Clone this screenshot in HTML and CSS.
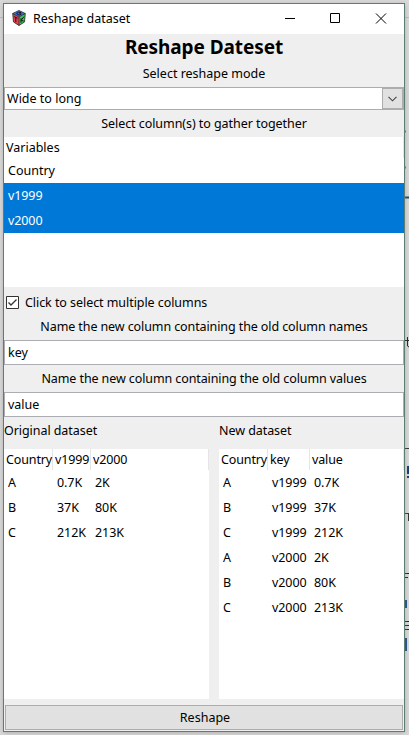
FILE: index.html
```html
<!DOCTYPE html>
<html lang="en">
<head>
<meta charset="utf-8">
<title>Reshape dataset</title>
<link rel="stylesheet" href="styles.css">
</head>
<body>
<svg class="backdrop" width="409" height="735" viewBox="0 0 409 735">
  <path d="M0 17.5H3M405 17.5H409" stroke="#bdbdbd"/>
  <path d="M405 131.5H406M405 167.5H406" stroke="#5677a5" stroke-width="2"/>
  <path d="M405 197.5H409" stroke="#1c4668" stroke-width="2"/>
  <path d="M405 340.5H409M407.5 337V346L409 347" stroke="#222" fill="none"/>
  <path d="M405 448.5H409M405 513.5H409M408.5 513V521" stroke="#333" fill="none"/>
  <path d="M408 466V474M408 476V478" stroke="#153c78" stroke-width="2"/>
  <path d="M405 573.5H409M405 577.5H408M405 621.5H409M405 625.5H409M405 629.5H409" stroke="#222"/>
  <path d="M406 600V608M406 638V651" stroke="#164a88" stroke-width="2"/>
</svg>
<main class="window">
  <header class="titlebar">
    <svg class="logo" width="14" height="16" viewBox="0 0 14 16">
      <path d="M7 .5L13.3 3.5 7 7 .7 3.5Z" fill="#3c6fd6"/>
      <path d="M.7 3.5L7 7V15.5L1.5 12Z" fill="#e8404a"/>
      <path d="M13.3 3.5L7 7V15.5L12.5 12Z" fill="#2fcf48"/>
      <path d="M7 .5L13.3 3.5 12.5 12 7 15.5 1.5 12 .7 3.5ZM.7 3.5L7 7L13.3 3.5M7 7V15.5" fill="none" stroke="#26262e" stroke-width=".8"/>
      <path d="M9 2.6L6.5 2.2 4.6 3.5 7 5.2 9.2 4 7.5 3.5M2.2 6.6L5.5 8.3M3.8 7.5V12M9 8.2V12.8M12 6.6L9.2 10.2L11.8 11.2" fill="none" stroke="#151523"/>
    </svg>
    <span class="caption">Reshape dataset</span>
    <svg class="controls" width="102" height="11" viewBox="0 0 102 11">
      <path d="M0 5.5H10M45.5.5H54.5V9.5H45.5ZM91 .5L101 10.5M101 .5L91 10.5" fill="none" stroke="#000"/>
    </svg>
  </header>
  <h1>Reshape Dateset</h1>
  <p class="label mode">Select reshape mode</p>
  <div class="combo"><span>Wide to long</span><i><svg width="9" height="6" viewBox="0 0 9 6"><path d="M.5 .8L4.5 4.8 8.5 .8" fill="none" stroke="#444" stroke-width="1.1"/></svg></i></div>
  <p class="label gather">Select column(s) to gather together</p>
  <section class="list">
    <div class="list-head">Variables</div>
    <div class="item">Country</div>
    <div class="item selected">v1999</div>
    <div class="item selected">v2000</div>
  </section>
  <div class="check"><svg width="13" height="13" viewBox="0 0 13 13"><path d="M.5.5H12.5V12.5H.5Z" fill="#fff" stroke="#333"/><path d="M2.5 6.5L5 9 10.5 3.5" fill="none" stroke="#333" stroke-width="1.3"/></svg><span>Click to select multiple columns</span></div>
  <p class="label names">Name the new column containing the old column names</p>
  <div class="entry">key</div>
  <p class="label values">Name the new column containing the old column values</p>
  <div class="entry">value</div>
  <div class="tables">
    <section>
      <h2>Original dataset</h2>
      <div class="grid original">
        <b>Country</b><b>v1999</b><b>v2000</b>
        <span>A</span><span>0.7K</span><span>2K</span>
        <span>B</span><span>37K</span><span>80K</span>
        <span>C</span><span>212K</span><span>213K</span>
      </div>
    </section>
    <section>
      <h2>New dataset</h2>
      <div class="grid new">
        <b>Country</b><b>key</b><b>value</b>
        <span>A</span><span>v1999</span><span>0.7K</span>
        <span>B</span><span>v1999</span><span>37K</span>
        <span>C</span><span>v1999</span><span>212K</span>
        <span>A</span><span>v2000</span><span>2K</span>
        <span>B</span><span>v2000</span><span>80K</span>
        <span>C</span><span>v2000</span><span>213K</span>
      </div>
    </section>
  </div>
  <button>Reshape</button>
</main>
</body>
</html>
```
FILE: styles.css
```css
* { box-sizing: border-box; }
body { margin: 0; width: 409px; height: 735px; overflow: hidden; padding: 3px; background: #dadada; color: #000; font: 12.5px/18px "Noto Sans", "Noto Sans CJK SC", sans-serif; }
.backdrop { position: absolute; left: 0; top: 0; }
.window { position: relative; width: 402px; height: 729px; border: 1px solid #5d7d73; background: #efefef; box-shadow: 0 1px 5px #8888; display: flex; flex-direction: column; }
.titlebar { height: 30px; flex: none; display: flex; align-items: center; background: #fff; padding: 0 17px 2px 8px; }
.caption { margin-left: 7px; padding-top: 2px; }
.controls { margin-left: auto; }
h1 { margin: 0; height: 28px; font-size: 19px; line-height: 26px; letter-spacing: -.08px; text-align: center; }
p { margin: 0; text-align: center; white-space: nowrap; }
.mode { height: 25px; line-height: 23px; }
.combo { height: 23px; flex: none; border: 1px solid #adadad; background: #fff; display: flex; justify-content: space-between; align-items: center; padding-left: 2px; }
.combo i { width: 21px; height: 21px; border: 1px solid #adadad; background: #e1e1e1; display: grid; place-items: center; }
.gather { height: 27px; line-height: 27px; letter-spacing: -.06px; }
.list { height: 150px; flex: none; background: #fff; }
.list-head { height: 21px; line-height: 22px; padding-left: 2px; border-right: 1px solid #e5e5e5; }
.item { height: 25px; line-height: 25px; padding-left: 4px; }
.selected { background: #0078d7; color: #fff; letter-spacing: -.1px; }
.check { height: 29px; display: flex; align-items: center; gap: 6px; padding: 2px 2px 0; letter-spacing: -.06px; }
.names { height: 24px; line-height: 21px; letter-spacing: -.1px; }
.entry { height: 25px; flex: none; border: 1px solid #abadb3; background: #fff; padding-left: 3px; line-height: 24px; }
.values { height: 27px; line-height: 27px; letter-spacing: -.1px; }
.tables { display: grid; grid-template-columns: 205px 185px; gap: 10px; height: 282px; flex: none; }
h2 { margin: 0; height: 32px; font-size: inherit; font-weight: 400; line-height: 27px; letter-spacing: -.06px; }
.grid { display: grid; height: 250px; background: #fff; align-content: start; grid-auto-rows: 25px; line-height: 25px; }
.original { grid-template: 21px / 49px 38px 118px; }
.new { grid-template: 21px / 49px 42px 94px; }
.grid b { font-weight: 400; line-height: 22px; padding-left: 2px; border-right: 1px solid #e5e5e5; letter-spacing: -.12px; }
.grid span { padding-left: 4px; letter-spacing: -.08px; }
button { margin: 6px 1px 0; height: 25px; border: 1px solid #adadad; background: #e1e1e1; font: inherit; color: #000; padding: 0 0 0 2px; }
```
